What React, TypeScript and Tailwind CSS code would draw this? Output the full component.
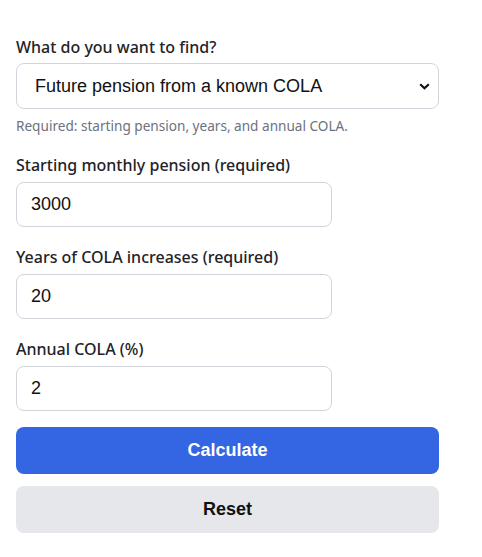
import React, { useState } from "react";

const labelCls =
  "block text-[16px] leading-[22px] font-medium text-[#1f2328] mb-[6px] [font-family:'Noto_Sans',sans-serif]";
const inputCls =
  "block w-[316px] h-[45px] px-[14px] rounded-lg border border-[#d1d5db] bg-white text-[18px] text-[#111] [font-family:'Liberation_Sans',Arial,sans-serif] outline-none";

const App: React.FC = () => {
  const [mode, setMode] = useState("future");
  const [pension, setPension] = useState("3000");
  const [years, setYears] = useState("20");
  const [cola, setCola] = useState("2");

  const reset = () => {
    setPension("");
    setYears("");
    setCola("");
  };

  return (
    <div className="min-h-screen bg-white">
      <div className="w-[423px] ml-4 pt-[36px]">
        {/* Mode */}
        <label className={`${labelCls} !mb-[5px]`}>What do you want to find?</label>
        <div className="relative">
          <select
            value={mode}
            onChange={(e) => setMode(e.target.value)}
            className="block w-full h-[46px] pl-[18px] pr-10 appearance-none rounded-lg border border-[#d1d5db] bg-white text-[18px] text-[#111] [font-family:'Liberation_Sans',Arial,sans-serif] outline-none"
          >
            <option value="future">Future pension from a known COLA</option>
            <option value="rate">COLA rate needed to reach a target</option>
          </select>
          <svg
            className="absolute right-[9px] top-[20px] w-[11px] h-[7px] pointer-events-none"
            viewBox="0 0 11 7"
          >
            <path d="M1.2 1.2 L5.5 5.3 L9.8 1.2" fill="none" stroke="#111" strokeWidth="2.2" />
          </svg>
        </div>
        <p className="mt-[8px] text-[13.6px] leading-[18px] text-[#6b7280] [font-family:'Noto_Sans',sans-serif]">
          Required: starting pension, years, and annual COLA.
        </p>

        {/* Pension */}
        <div className="mt-[19px]">
          <label className={labelCls}>Starting monthly pension (required)</label>
          <input className={inputCls} value={pension} onChange={(e) => setPension(e.target.value)} />
        </div>

        <div className="mt-[19px]">
          <label className={labelCls}>Years of COLA increases (required)</label>
          <input className={inputCls} value={years} onChange={(e) => setYears(e.target.value)} />
        </div>

        <div className="mt-[19px]">
          <label className={labelCls}>Annual COLA (%)</label>
          <input className={inputCls} value={cola} onChange={(e) => setCola(e.target.value)} />
        </div>

        <button className="mt-[16px] w-full h-[47px] rounded-lg bg-[#3465e3] text-white text-[18px] font-bold [font-family:'Liberation_Sans',Arial,sans-serif]">
          Calculate
        </button>
        <button
          onClick={reset}
          className="mt-[12px] w-full h-[47px] rounded-lg bg-[#e5e7eb] text-[#111] text-[18px] font-bold [font-family:'Liberation_Sans',Arial,sans-serif]"
        >
          Reset
        </button>
      </div>
    </div>
  );
};

export default App;
